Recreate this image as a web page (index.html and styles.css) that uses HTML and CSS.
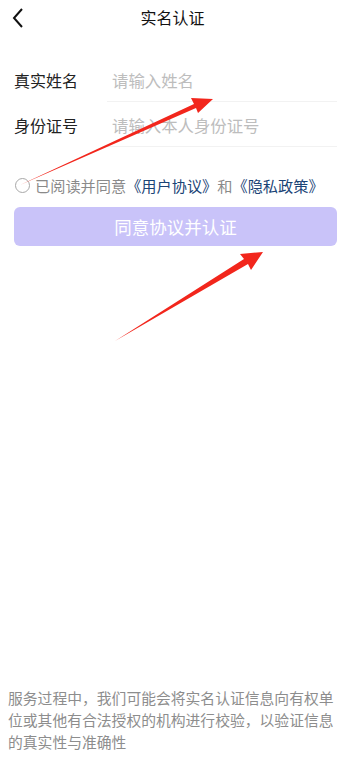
FILE: index.html
```html
<!DOCTYPE html>
<html lang="zh-CN">
<head>
    <meta charset="UTF-8">
    <meta name="viewport" content="width=device-width, initial-scale=1.0">
    <title>实名认证</title>
    <link rel="stylesheet" href="styles.css">
</head>
<body>
    <div class="page">
        <div class="nav-bar">
            <span class="back">
                <svg width="14" height="22" viewBox="0 0 14 22"><path d="M10 2 L2 11 L10 20" fill="none" stroke="#111" stroke-width="2"/></svg>
            </span>
            <span class="nav-title">实名认证</span>
        </div>

        <div class="form">
            <div class="form-row">
                <span class="label">真实姓名</span>
                <span class="field">请输入姓名</span>
            </div>
            <div class="form-row">
                <span class="label">身份证号</span>
                <span class="field">请输入本人身份证号</span>
            </div>
        </div>

        <div class="agree">
            <span class="radio"></span>
            <span>已阅读并同意</span><span class="link">《用户协议》</span><span>和</span><span class="link">《隐私政策》</span>
        </div>

        <button class="submit">同意协议并认证</button>

        <div class="spacer"></div>

        <p class="notice">服务过程中，我们可能会将实名认证信息向有权单位或其他有合法授权的机构进行校验，以验证信息的真实性与准确性</p>

        <svg class="arrows" width="345" height="768" viewBox="0 0 345 768">
            <polygon points="20,185 194,104 191,98 213,99 198,113 196,108" fill="#f2261c"/>
            <polygon points="115,341 244,259 240,254 263,252 251,270 248,264" fill="#f2261c"/>
        </svg>
    </div>
</body>
</html>
```

FILE: styles.css
```css
* {
    box-sizing: border-box;
}

body {
    margin: 0;
    background-color: #fff;
    font-family: "Noto Sans CJK SC", "Noto Sans", sans-serif;
}

.page {
    position: relative;
    width: 345px;
    height: 768px;
    display: flex;
    flex-direction: column;
    overflow: hidden;
}

.nav-bar {
    height: 34px;
    display: flex;
    align-items: center;
    justify-content: center;
    position: relative;
}

.back {
    position: absolute;
    left: 12px;
    top: 7px;
    display: flex;
}

.nav-title {
    font-size: 16px;
    color: #111;
}

.form {
    margin-top: 23px;
}

.form-row {
    height: 45px;
    display: flex;
    align-items: center;
    padding-left: 14px;
    position: relative;
}

.form-row::after {
    content: "";
    position: absolute;
    left: 107px;
    right: 8px;
    bottom: 0;
    height: 1px;
    background-color: #f2f2f2;
}

.label {
    width: 98px;
    font-size: 16px;
    color: #222;
}

.field {
    font-size: 16.4px;
    color: #bdbdbd;
}

.agree {
    margin-top: 26px;
    padding-left: 15px;
    display: flex;
    align-items: center;
    font-size: 15.2px;
    color: #8a8a8a;
    height: 24px;
}

.radio {
    width: 15px;
    height: 15px;
    border: 1px solid #a8a8a8;
    border-radius: 50%;
    margin-right: 5px;
}

.link {
    color: #1a4476;
}

.submit {
    margin: 10px 8px 0 14px;
    height: 39px;
    border: none;
    border-radius: 6px;
    background-color: #c9c3f9;
    color: #fff;
    font-family: inherit;
    font-size: 17.5px;
}

.spacer {
    flex: 1;
}

.notice {
    margin: 0 7px 15px 8px;
    font-size: 14.8px;
    line-height: 22px;
    color: #8d8d8d;
}

.arrows {
    position: absolute;
    left: 0;
    top: 0;
    pointer-events: none;
}
```
